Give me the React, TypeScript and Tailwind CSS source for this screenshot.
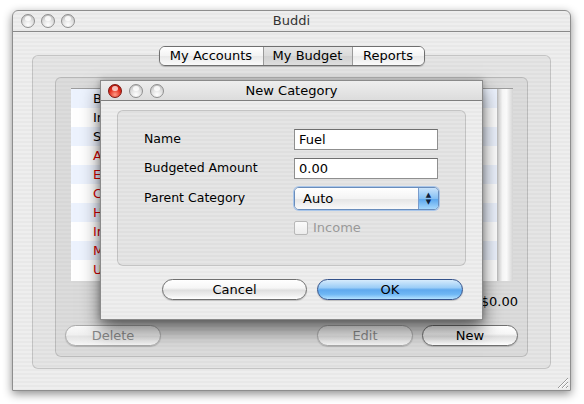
import React from 'react';

const stripes =
  'bg-[image:repeating-linear-gradient(180deg,#eeeeee_0px,#eeeeee_2px,#e8e8e8_2px,#e8e8e8_4px)]';

type LightProps = { red?: boolean };

function Light({ red }: LightProps) {
  return red ? (
    <span className="relative block size-[14px] rounded-full border border-[#7d1610] bg-[radial-gradient(circle_at_50%_80%,#ff9a85_0%,#e3301f_50%,#a20e07_100%)]">
      <span className="absolute left-[3px] top-[1px] h-[5px] w-[6px] rounded-full bg-white/70" />
    </span>
  ) : (
    <span className="relative block size-[14px] rounded-full border border-[#8f8f8f] bg-[radial-gradient(circle_at_50%_80%,#ffffff_0%,#dcdcdc_55%,#b3b3b3_100%)]">
      <span className="absolute left-[3px] top-[1px] h-[5px] w-[6px] rounded-full bg-white/80" />
    </span>
  );
}

type ButtonProps = {
  label: string;
  kind?: 'normal' | 'disabled' | 'default';
  className?: string;
};

function AquaButton({ label, kind = 'normal', className = '' }: ButtonProps) {
  const look =
    kind === 'default'
      ? 'border-[#34528a] text-black bg-[linear-gradient(180deg,#d6ebfc_0%,#9bcdf7_40%,#5fa9ee_52%,#6fb7f4_75%,#b4e2ff_100%)]'
      : kind === 'disabled'
        ? 'border-[#ababab] text-[#8c8c8c] bg-[linear-gradient(180deg,#fafafa_0%,#f0f0f0_45%,#e4e4e4_55%,#f0f0f0_85%,#f8f8f8_100%)]'
        : 'border-[#707070] text-black bg-[linear-gradient(180deg,#ffffff_0%,#f6f6f6_42%,#dfdfdf_54%,#efefef_80%,#ffffff_100%)]';
  return (
    <div
      className={`flex h-[21px] items-center justify-center rounded-full border shadow-[0_1px_1px_rgba(0,0,0,0.18)] ${look} ${className}`}
    >
      {label}
    </div>
  );
}

// most of each name sits under the dialog
const rows = [
  { name: 'Bonus', red: false },
  { name: 'Interest', red: false },
  { name: 'Salary', red: false },
  { name: 'Auto', red: true },
  { name: 'Eating', red: true },
  { name: 'Cable', red: true },
  { name: 'Health', red: true },
  { name: 'Insurance', red: true },
  { name: 'Misc', red: true },
  { name: 'Utilities', red: true },
];

export default function App() {
  return (
    <div className="relative h-[404px] w-[584px] overflow-hidden bg-white font-['DejaVu_Sans',sans-serif] text-[12px] text-black">
      {/* main window */}
      <div className="pl-[12px] pt-[10px]">
        <div className={`flex h-[381px] w-[559px] flex-col rounded-t-[6px] border border-[#8e8e8e] shadow-[0_3px_10px_rgba(0,0,0,0.45)] ${stripes}`}>
          <div className="grid h-[21px] grid-cols-[1fr_auto_1fr] items-center border-b border-[#8a8a8a] px-[8px]">
            <div className="flex gap-[6px]">
              <Light />
              <Light />
              <Light />
            </div>
            <span className="text-[13px] text-[#333333]">Buddi</span>
            <div />
          </div>

          <div className="flex flex-1 flex-col pt-[14px]">
            {/* tabs */}
            <div className="relative z-10 flex justify-center">
              <div className="flex h-[20px] overflow-hidden rounded-[6px] border border-[#6f6f6f] text-[13px] shadow-[0_1px_1px_rgba(0,0,0,0.2)]">
                <div className="flex w-[104px] items-center justify-center border-r border-[#9a9a9a] bg-[linear-gradient(180deg,#ffffff,#f3f3f3_50%,#e9e9e9_52%,#fafafa)]">
                  My Accounts
                </div>
                <div className="flex w-[89px] items-center justify-center border-r border-[#9a9a9a] bg-[linear-gradient(180deg,#e6e6e6,#dadada_50%,#d0d0d0_52%,#dedede)]">
                  My Budget
                </div>
                <div className="flex w-[71px] items-center justify-center bg-[linear-gradient(180deg,#ffffff,#f3f3f3_50%,#e9e9e9_52%,#fafafa)]">
                  Reports
                </div>
              </div>
            </div>

            {/* outer group */}
            <div className="mx-[19px] -mt-[11px] h-[314px] rounded-[6px] border border-black/15 bg-black/[0.035] pl-[22px] pr-[22px] pt-[21px]">
              {/* inner group */}
              <div className="flex h-[280px] flex-col rounded-[6px] border border-black/15 bg-black/[0.035]">
                <div className="ml-[15px] mt-[10px] flex h-[193px] w-[442px] border-t border-[#9c9c9c] bg-white">
                  <div className="flex-1">
                    {rows.map((r, i) => (
                      <div
                        key={r.name}
                        className={`flex h-[19px] items-center pl-[22px] text-[13px] ${i % 2 === 0 ? 'bg-[#edf3fe]' : 'bg-white'} ${r.red ? 'text-[#d40000]' : 'text-black'}`}
                      >
                        {r.name}
                      </div>
                    ))}
                  </div>
                  <div className="w-[16px] bg-[linear-gradient(90deg,#b8b8b8_0%,#d8d8d8_12%,#f7f7f7_35%,#fbfbfb_60%,#e2e2e2_85%,#d4d4d4_100%)]" />
                </div>

                <div className="mr-[9px] mt-[13px] h-[16px] text-right text-[13px] leading-[16px]">$0.00</div>

                <div className="mt-[15px] flex items-center px-[9px]">
                  <AquaButton label="Delete" kind="disabled" className="w-[96px] text-[13px]" />
                  <div className="flex-1" />
                  <AquaButton label="Edit" kind="disabled" className="w-[96px] text-[13px]" />
                  <AquaButton label="New" className="ml-[9px] w-[96px] text-[13px]" />
                </div>
              </div>
            </div>

            <div className="flex flex-1 items-end justify-end pb-[1px] pr-[1px]">
              <svg width="13" height="13" viewBox="0 0 13 13">
                <path d="M12 2 L2 12 M12 6 L6 12 M12 10 L10 12" stroke="#9a9a9a" strokeWidth="1" />
                <path d="M12 3 L3 12 M12 7 L7 12 M12 11 L11 12" stroke="#ffffff" strokeWidth="1" />
              </svg>
            </div>
          </div>
        </div>
      </div>

      {/* dialog */}
      <div className={`absolute left-[100px] top-[80px] flex h-[240px] w-[383px] flex-col border border-[#8a8a8a] shadow-[0_10px_18px_rgba(0,0,0,0.55),0_0_6px_rgba(0,0,0,0.25)] ${stripes}`}>
        <div className="grid h-[20px] grid-cols-[1fr_auto_1fr] items-center border-b border-[#7f7f7f] bg-[linear-gradient(180deg,#eeeeee,#dcdcdc)] px-[7px]">
          <div className="flex gap-[7px]">
            <Light red />
            <Light />
            <Light />
          </div>
          <span className="text-[13px]">New Category</span>
          <div />
        </div>

        <div className="ml-[16px] mt-[9px] h-[156px] w-[349px] rounded-[6px] border border-black/15 bg-black/[0.035]">
          <div className="ml-[26px] mt-[18px] grid grid-cols-[150px_145px] items-center gap-y-[8px] text-[13px]">
            <span className="text-[12.5px]">Name</span>
            <div className="flex h-[21px] w-[144px] items-center border border-[#8f8f8f] border-t-[#6f6f6f] bg-white pl-[4px]">Fuel</div>
            <span className="text-[12.5px]">Budgeted Amount</span>
            <div className="flex h-[21px] w-[144px] items-center border border-[#8f8f8f] border-t-[#6f6f6f] bg-white pl-[4px]">0.00</div>
            <span className="text-[12.5px]">Parent Category</span>
            <div className="flex h-[23px] w-[145px] overflow-hidden rounded-[5px] border border-[#6a8dbb] shadow-[0_0_0_1px_#a9c6ea]">
              <div className="flex flex-1 items-center bg-[linear-gradient(180deg,#ffffff,#f4f4f4_50%,#e6e6e6_55%,#fafafa)] pl-[8px]">Auto</div>
              <div className="flex w-[20px] flex-col items-center justify-center border-l border-[#7a9ccc] bg-[linear-gradient(180deg,#c9e3fb,#86c0f3_50%,#5ea8ee_55%,#a6d8fd)] text-[7px] leading-[7px] text-[#10203a]">
                <span>▲</span>
                <span>▼</span>
              </div>
            </div>
            <span />
            <div className="flex items-center gap-[5px] text-[#999999]">
              <span className="block size-[14px] rounded-[2px] border border-[#b8b8b8] bg-[linear-gradient(180deg,#fbfbfb,#ececec)]" />
              Income
            </div>
          </div>
        </div>

        <div className="ml-[61px] mt-[13px] flex gap-[10px] text-[13px]">
          <AquaButton label="Cancel" className="w-[145px]" />
          <AquaButton label="OK" kind="default" className="w-[146px]" />
        </div>
      </div>
    </div>
  );
}
